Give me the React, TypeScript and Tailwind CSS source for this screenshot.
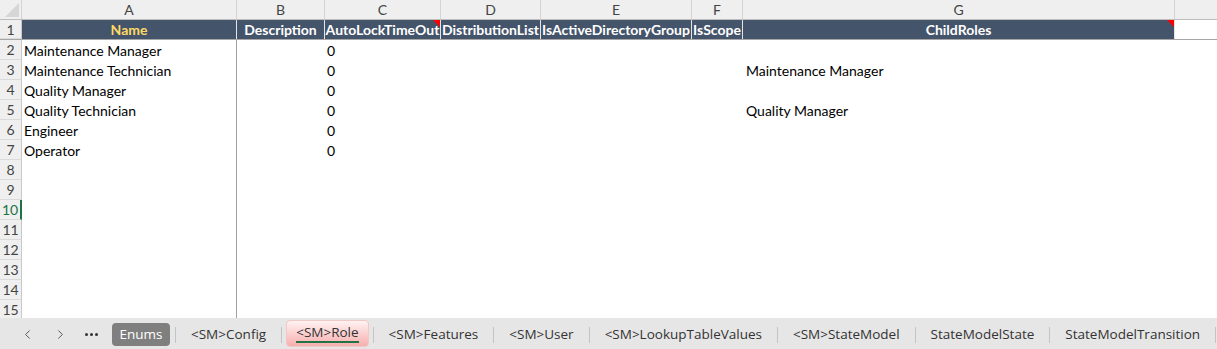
import { ChevronLeft, ChevronRight } from 'lucide-react';

const COLS = [
  { key: 'A', width: 215, title: 'Name' },
  { key: 'B', width: 88, title: 'Description' },
  { key: 'C', width: 116, title: 'AutoLockTimeOut', note: true },
  { key: 'D', width: 100, title: 'DistributionList' },
  { key: 'E', width: 151, title: 'IsActiveDirectoryGroup' },
  { key: 'F', width: 51, title: 'IsScope' },
  { key: 'G', width: 432, title: 'ChildRoles', note: true },
];

const ROWS: { name: string; lock: string; child: string }[] = [
  { name: 'Maintenance Manager', lock: '0', child: '' },
  { name: 'Maintenance Technician', lock: '0', child: 'Maintenance Manager' },
  { name: 'Quality Manager', lock: '0', child: '' },
  { name: 'Quality Technician', lock: '0', child: 'Quality Manager' },
  { name: 'Engineer', lock: '0', child: '' },
  { name: 'Operator', lock: '0', child: '' },
];

const SHEETS = [
  '<SM>Config',
  '<SM>Role',
  '<SM>Features',
  '<SM>User',
  '<SM>LookupTableValues',
  '<SM>StateModel',
  'StateModelState',
  'StateModelTransition',
];

const cellFont = { fontFamily: 'Lato, "Liberation Sans", sans-serif' };

function RowHead({ n, active }: { n: number; active?: boolean }) {
  return (
    <div
      className={`w-[22px] shrink-0 h-full flex items-center justify-center bg-[#efefef] border-b border-[#dadada] text-[14px] ${
        active ? 'text-[#217346] border-r-2 border-r-[#217346]' : 'text-[#444] border-r border-r-[#c8c8c8]'
      }`}
    >
      {n}
    </div>
  );
}

export default function App() {
  const empty = Array.from({ length: 8 }, (_, i) => i + 8);

  return (
    <div className="w-[1217px] h-[349px] flex flex-col overflow-hidden bg-white" style={cellFont}>
      {/* Sheet */}
      <div className="h-[318px] overflow-hidden flex flex-col">
        {/* Column letters */}
        <div className="h-[20px] shrink-0 flex bg-[#efefef] border-b border-[#bdbdbd]">
          <div className="w-[22px] shrink-0 h-full flex items-end justify-end border-r border-[#d4d4d4]">
            <svg width="14" height="14" viewBox="0 0 14 14" className="mr-[2px] mb-[2px]">
              <polygon points="14,0 14,14 0,14" fill="#d6d6d6" />
            </svg>
          </div>
          {COLS.map((c) => (
            <div
              key={c.key}
              style={{ width: c.width }}
              className="shrink-0 h-full flex items-center justify-center border-r border-[#d4d4d4] text-[14px] text-[#444]"
            >
              {c.key}
            </div>
          ))}
          <div className="flex-1" />
        </div>

        {/* Row 1: header */}
        <div className="h-[20px] shrink-0 flex border-b border-[#a6a6a6]">
          <RowHead n={1} />
          {COLS.map((c) => (
            <div
              key={c.key}
              style={{ width: c.width }}
              className={`relative shrink-0 h-full flex items-center justify-center bg-[#44546a] border-r border-[#e4e4e4] text-[14px] font-bold whitespace-nowrap overflow-hidden ${
                c.key === 'A' ? 'text-[#ffd966]' : 'text-white'
              }`}
            >
              {c.title}
              {c.note && (
                <svg width="7" height="7" viewBox="0 0 7 7" className="absolute top-0 right-0">
                  <polygon points="0,0 7,0 7,7" fill="#ff0000" />
                </svg>
              )}
            </div>
          ))}
          <div className="flex-1" />
        </div>

        {/* Data rows */}
        {ROWS.map((r, i) => (
          <div key={i} className="h-[20px] shrink-0 flex text-[14px] text-black">
            <RowHead n={i + 2} />
            <div className="w-[215px] shrink-0 h-full flex items-center pl-[2px] border-r border-[#a0a0a0] whitespace-nowrap">{r.name}</div>
            <div className="w-[88px] shrink-0" />
            <div className="w-[116px] shrink-0 h-full flex items-center pl-[2px]">{r.lock}</div>
            <div className="w-[100px] shrink-0" />
            <div className="w-[151px] shrink-0" />
            <div className="w-[51px] shrink-0" />
            <div className="w-[432px] shrink-0 h-full flex items-center pl-[3px] whitespace-nowrap">{r.child}</div>
          </div>
        ))}
        {empty.map((n) => (
          <div key={n} className="h-[20px] shrink-0 flex">
            <RowHead n={n} active={n === 10} />
            <div className="w-[215px] shrink-0 h-full border-r border-[#a0a0a0]" />
          </div>
        ))}
      </div>

      {/* Sheet tabs */}
      <div
        className="flex-1 flex items-center pt-[2px] bg-[#e6e6e6] text-[13.5px] text-[#333]"
        style={{ fontFamily: '"Open Sans", "Noto Sans", sans-serif' }}
      >
        <div className="w-[112px] shrink-0 flex items-center text-[#444]">
          <ChevronLeft size={15} strokeWidth={1.4} className="ml-[20px]" />
          <ChevronRight size={15} strokeWidth={1.4} className="ml-[18px]" />
          <div className="ml-[17px] flex gap-[2px]">
            <span className="w-[3px] h-[3px] rounded-full bg-[#333]" />
            <span className="w-[3px] h-[3px] rounded-full bg-[#333]" />
            <span className="w-[3px] h-[3px] rounded-full bg-[#333]" />
          </div>
        </div>
        <div className="h-[23px] w-[58px] shrink-0 flex items-center justify-center rounded-[4px] bg-[#7f7f7f] text-white">
          Enums
        </div>
        <span className="w-px h-[16px] bg-[#c4c4c4] ml-[5px]" />
        {SHEETS.map((s) =>
          s === '<SM>Role' ? (
            <div key={s} className="flex items-center">
              <div className="h-[27px] mt-[-2px] ml-[4px] px-[9px] flex items-center rounded-[4px] border border-[#f0c8c8] bg-gradient-to-b from-[#fff2f2] to-[#f6aeae]">
                <span className="border-b-2 border-[#217346] leading-[17px]">{s}</span>
              </div>
              <span className="w-px h-[16px] bg-[#c4c4c4] ml-[4px]" />
            </div>
          ) : (
            <div key={s} className="flex items-center">
              <span className="px-[15px] whitespace-nowrap">{s}</span>
              <span className="w-px h-[16px] bg-[#c4c4c4]" />
            </div>
          )
        )}
      </div>
    </div>
  );
}
